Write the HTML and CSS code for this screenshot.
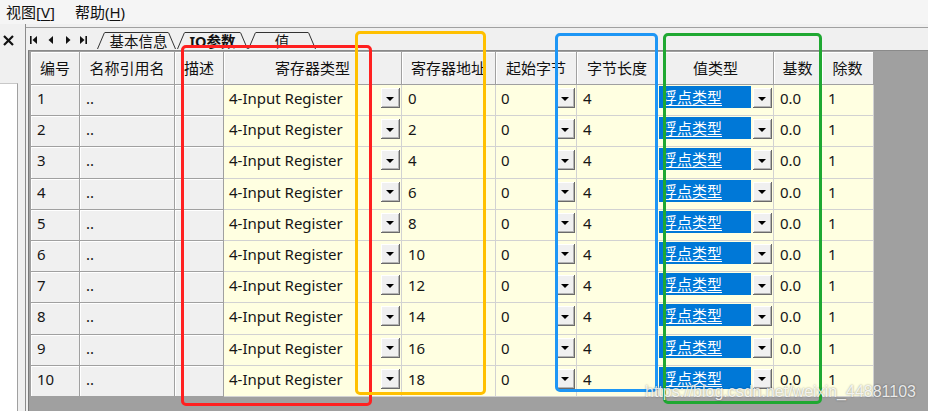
FILE: index.html
```html
<!DOCTYPE html>
<html lang="zh-CN">
<head>
<meta charset="utf-8">
<title>IO参数</title>
<link rel="stylesheet" href="styles.css">
</head>
<body>
<div class="app">
  <div class="menubar">
    <span class="menu">视图[<u>V</u>]</span>
    <span class="menu">帮助(<u>H</u>)</span>
  </div>
  <div class="workspace">
    <div class="side">
      <div class="side-head">
        <svg class="close" width="11" height="11" viewBox="0 0 11 11"><path d="M1 1L10 10M10 1L1 10" stroke="#111" stroke-width="2.2" fill="none"/></svg>
      </div>
      <div class="side-list"></div>
    </div>
    <div class="main">
      <div class="tabbar">
        <div class="nav">
          <svg width="69" height="22" viewBox="0 0 69 22">
            <rect x="2" y="8" width="1.6" height="8" fill="#111"/>
            <path d="M9 8L4.5 12L9 16Z" fill="#111"/>
            <path d="M25 8L20.5 12L25 16Z" fill="#111"/>
            <path d="M38 8L42.5 12L38 16Z" fill="#111"/>
            <path d="M52 8L56.5 12L52 16Z" fill="#111"/>
            <rect x="57.4" y="8" width="1.6" height="8" fill="#111"/>
          </svg>
        </div>
        <div class="tabs">
          <div class="tab t1">
            <svg class="sl" width="8" height="17" viewBox="0 0 8 17"><path d="M0.5 17L7.5 0.5" stroke="#333" stroke-width="1" fill="none"/></svg>
            <span class="label">基本信息</span>
            <svg class="sl" width="8" height="17" viewBox="0 0 8 17"><path d="M0.5 0.5L7.5 17" stroke="#333" stroke-width="1" fill="none"/></svg>
          </div>
          <div class="tab t2 active">
            <svg class="sl" width="8" height="17" viewBox="0 0 8 17"><path d="M0.5 17L7.5 0.5" stroke="#333" stroke-width="1" fill="none"/></svg>
            <span class="label">IO参数</span>
            <svg class="sl" width="8" height="17" viewBox="0 0 8 17"><path d="M0.5 0.5L7.5 17" stroke="#333" stroke-width="1" fill="none"/></svg>
          </div>
          <div class="tab t3">
            <svg class="sl" width="8" height="17" viewBox="0 0 8 17"><path d="M0.5 17L7.5 0.5" stroke="#333" stroke-width="1" fill="none"/></svg>
            <span class="label">值</span>
            <svg class="sl" width="8" height="17" viewBox="0 0 8 17"><path d="M0.5 0.5L7.5 17" stroke="#333" stroke-width="1" fill="none"/></svg>
          </div>
        </div>
      </div>
      <div class="viewport">
        <div class="grid">
          <div class="h">编号</div><div class="h">名称引用名</div><div class="h">描述</div><div class="h">寄存器类型</div><div class="h">寄存器地址</div><div class="h">起始字节</div><div class="h">字节长度</div><div class="h">值类型</div><div class="h">基数</div><div class="h">除数</div>

          <div class="c ro">1</div><div class="c ro">..</div><div class="c ro"></div><div class="c ed dd"><span>4-Input Register</span><i class="btn"></i></div><div class="c ed">0</div><div class="c ed dd"><span>0</span><i class="btn"></i></div><div class="c ed">4</div><div class="c ed vt"><span class="sel"><span class="clip"><span>浮点类型</span></span></span><i class="btn"></i></div><div class="c ed">0.0</div><div class="c ed">1</div>

          <div class="c ro">2</div><div class="c ro">..</div><div class="c ro"></div><div class="c ed dd"><span>4-Input Register</span><i class="btn"></i></div><div class="c ed">2</div><div class="c ed dd"><span>0</span><i class="btn"></i></div><div class="c ed">4</div><div class="c ed vt"><span class="sel"><span class="clip"><span>浮点类型</span></span></span><i class="btn"></i></div><div class="c ed">0.0</div><div class="c ed">1</div>

          <div class="c ro">3</div><div class="c ro">..</div><div class="c ro"></div><div class="c ed dd"><span>4-Input Register</span><i class="btn"></i></div><div class="c ed">4</div><div class="c ed dd"><span>0</span><i class="btn"></i></div><div class="c ed">4</div><div class="c ed vt"><span class="sel"><span class="clip"><span>浮点类型</span></span></span><i class="btn"></i></div><div class="c ed">0.0</div><div class="c ed">1</div>

          <div class="c ro">4</div><div class="c ro">..</div><div class="c ro"></div><div class="c ed dd"><span>4-Input Register</span><i class="btn"></i></div><div class="c ed">6</div><div class="c ed dd"><span>0</span><i class="btn"></i></div><div class="c ed">4</div><div class="c ed vt"><span class="sel"><span class="clip"><span>浮点类型</span></span></span><i class="btn"></i></div><div class="c ed">0.0</div><div class="c ed">1</div>

          <div class="c ro">5</div><div class="c ro">..</div><div class="c ro"></div><div class="c ed dd"><span>4-Input Register</span><i class="btn"></i></div><div class="c ed">8</div><div class="c ed dd"><span>0</span><i class="btn"></i></div><div class="c ed">4</div><div class="c ed vt"><span class="sel"><span class="clip"><span>浮点类型</span></span></span><i class="btn"></i></div><div class="c ed">0.0</div><div class="c ed">1</div>

          <div class="c ro">6</div><div class="c ro">..</div><div class="c ro"></div><div class="c ed dd"><span>4-Input Register</span><i class="btn"></i></div><div class="c ed">10</div><div class="c ed dd"><span>0</span><i class="btn"></i></div><div class="c ed">4</div><div class="c ed vt"><span class="sel"><span class="clip"><span>浮点类型</span></span></span><i class="btn"></i></div><div class="c ed">0.0</div><div class="c ed">1</div>

          <div class="c ro">7</div><div class="c ro">..</div><div class="c ro"></div><div class="c ed dd"><span>4-Input Register</span><i class="btn"></i></div><div class="c ed">12</div><div class="c ed dd"><span>0</span><i class="btn"></i></div><div class="c ed">4</div><div class="c ed vt"><span class="sel"><span class="clip"><span>浮点类型</span></span></span><i class="btn"></i></div><div class="c ed">0.0</div><div class="c ed">1</div>

          <div class="c ro">8</div><div class="c ro">..</div><div class="c ro"></div><div class="c ed dd"><span>4-Input Register</span><i class="btn"></i></div><div class="c ed">14</div><div class="c ed dd"><span>0</span><i class="btn"></i></div><div class="c ed">4</div><div class="c ed vt"><span class="sel"><span class="clip"><span>浮点类型</span></span></span><i class="btn"></i></div><div class="c ed">0.0</div><div class="c ed">1</div>

          <div class="c ro">9</div><div class="c ro">..</div><div class="c ro"></div><div class="c ed dd"><span>4-Input Register</span><i class="btn"></i></div><div class="c ed">16</div><div class="c ed dd"><span>0</span><i class="btn"></i></div><div class="c ed">4</div><div class="c ed vt"><span class="sel"><span class="clip"><span>浮点类型</span></span></span><i class="btn"></i></div><div class="c ed">0.0</div><div class="c ed">1</div>

          <div class="c ro">10</div><div class="c ro">..</div><div class="c ro"></div><div class="c ed dd"><span>4-Input Register</span><i class="btn"></i></div><div class="c ed">18</div><div class="c ed dd"><span>0</span><i class="btn"></i></div><div class="c ed">4</div><div class="c ed vt"><span class="sel"><span class="clip"><span>浮点类型</span></span></span><i class="btn"></i></div><div class="c ed">0.0</div><div class="c ed">1</div>
        </div>
      </div>
    </div>
  </div>

  <div class="mark mark-red"></div>
  <div class="mark mark-orange"></div>
  <div class="mark mark-blue"></div>
  <div class="mark mark-green"></div>
  <div class="watermark">https://blog.csdn.net/weixin_44881103</div>
</div>
</body>
</html>
```

FILE: styles.css
```css
* { box-sizing: border-box; }
html, body { margin: 0; padding: 0; }
body {
  width: 928px;
  height: 411px;
  overflow: hidden;
  background: #f0f0f0;
  font-family: "Noto Sans", "Noto Sans CJK SC", sans-serif;
  color: #111;
}
.app {
  position: relative;
  width: 928px;
  height: 411px;
  display: flex;
  flex-direction: column;
}

/* menu */
.menubar {
  height: 24px;
  flex: none;
  display: flex;
  align-items: center;
  gap: 20px;
  padding-left: 6px;
  font-size: 15px;
  background: #f5f5f5;
}
.menu { line-height: 20px; }
.menu u { text-decoration: underline; text-underline-offset: 2px; }

/* workspace */
.workspace {
  flex: 1;
  display: flex;
  min-height: 0;
}
.side {
  width: 26px;
  flex: none;
  display: flex;
  flex-direction: column;
  border-right: 1px solid #8c8c8c;
}
.side-head {
  height: 59px;
  flex: none;
  padding: 11px 0 0 3px;
}
.close { display: block; }
.side-list {
  flex: 1;
  width: 18px;
  background: #fff;
  border-right: 1px solid #a0a0a0;
  border-top: 1px solid #c8c8c8;
}

.main {
  flex: 1;
  display: flex;
  flex-direction: column;
  margin-top: 3px;
  border-top: 1px solid #a0a0a0;
  padding-left: 2px;
  min-width: 0;
}

/* tabs */
.tabbar {
  height: 22px;
  flex: none;
  display: flex;
}
.nav { width: 69px; flex: none; }
.nav svg { display: block; }
.tabs {
  display: flex;
  padding-top: 4px;
}
.tab {
  display: flex;
  height: 17px;
}
.tab .sl { display: block; flex: none; }
.tab .label {
  border-top: 1px solid #333;
  font-size: 14.5px;
  line-height: 16px;
  text-align: center;
  white-space: nowrap;
}
.t1 .label { width: 63px; padding-left: 4px; }
.t2 { margin-left: 1px; }
.t2 .label { width: 55px; font-weight: bold; }
.t3 .label { width: 52px; }

/* grid viewport */
.viewport {
  flex: 1;
  background: #a0a0a0;
  border-left: 1px solid #7a7a7a;
  border-top: 1px solid #8a8a8a;
  padding: 1px 0 0 2px;
  overflow: hidden;
}
.grid {
  display: grid;
  width: 843px;
  grid-template-columns: 49px 95px 49px 178px 94px 81px 81px 116px 48px 52px;
  grid-template-rows: 33px repeat(10, 31.2px);
  font-size: 15px;
}
.h {
  display: flex;
  align-items: center;
  justify-content: center;
  background: #f0f0f0;
  border-right: 1px solid #a0a0a0;
  border-bottom: 1px solid #a0a0a0;
  box-shadow: inset 1px 1px 0 #fff;
  white-space: nowrap;
  overflow: hidden;
  color: #111;
  padding-bottom: 1px;
}
.c {
  padding: 3px 0 0 6px;
  line-height: 20px;
  white-space: nowrap;
  overflow: hidden;
  color: #161616;
}
.ro {
  background: #f0f0f0;
  border-right: 1px solid #a0a0a0;
  border-bottom: 1px solid #a0a0a0;
  box-shadow: inset 1px 1px 0 #fff;
}
.ed {
  background: #ffffe1;
  border-right: 1px solid #d2d2d2;
  border-bottom: 1px solid #d2d2d2;
}
.dd {
  display: flex;
  justify-content: space-between;
  align-items: flex-start;
  padding: 3px 1px 0 5px;
}
.btn {
  display: flex;
  align-items: center;
  justify-content: center;
  width: 19px;
  height: 20px;
  flex: none;
  background: #f0f0f0;
  box-shadow: inset -1px -1px 0 #6a6a6a, inset 1px 1px 0 #ffffff, inset -2px -2px 0 #b4b4b4;
}
.btn::after {
  content: "";
  width: 0;
  height: 0;
  border-left: 4px solid transparent;
  border-right: 4px solid transparent;
  border-top: 4px solid #000;
  margin: 1px 1px 0 0;
}
.vt {
  display: flex;
  align-items: flex-start;
  gap: 2px;
  padding: 1px 1px 0 1px;
}
.vt .btn { margin-top: 2px; }
.sel {
  flex: 1;
  height: 22px;
  background: #0078d7;
  color: #fff;
  padding: 1px 0 0 5px;
}
.clip {
  display: block;
  overflow: hidden;
  white-space: nowrap;
}
.clip span {
  display: inline-block;
  margin-left: -2px;
  text-decoration: underline;
  text-underline-offset: 2px;
}

/* annotation frames drawn on top of the screenshot */
.mark {
  position: absolute;
  border: 3px solid;
  border-radius: 5px;
  pointer-events: none;
}
.mark-red { left: 181px; top: 45px; width: 191px; height: 361px; border-color: #ff2020; }
.mark-orange { left: 355px; top: 31px; width: 131px; height: 364px; border-color: #ffc000; }
.mark-blue { left: 555px; top: 33px; width: 103px; height: 359px; border-color: #1e96f5; }
.mark-green { left: 663px; top: 33px; width: 159px; height: 371px; border-color: #1fa832; }

.watermark {
  position: absolute;
  left: 645px;
  top: 383px;
  font-family: "Liberation Sans", Arial, sans-serif;
  font-size: 16px;
  line-height: 18px;
  color: rgba(255, 255, 255, 0.85);
  text-shadow: 0 0 2px rgba(0, 0, 0, 0.45);
  white-space: nowrap;
}
```
